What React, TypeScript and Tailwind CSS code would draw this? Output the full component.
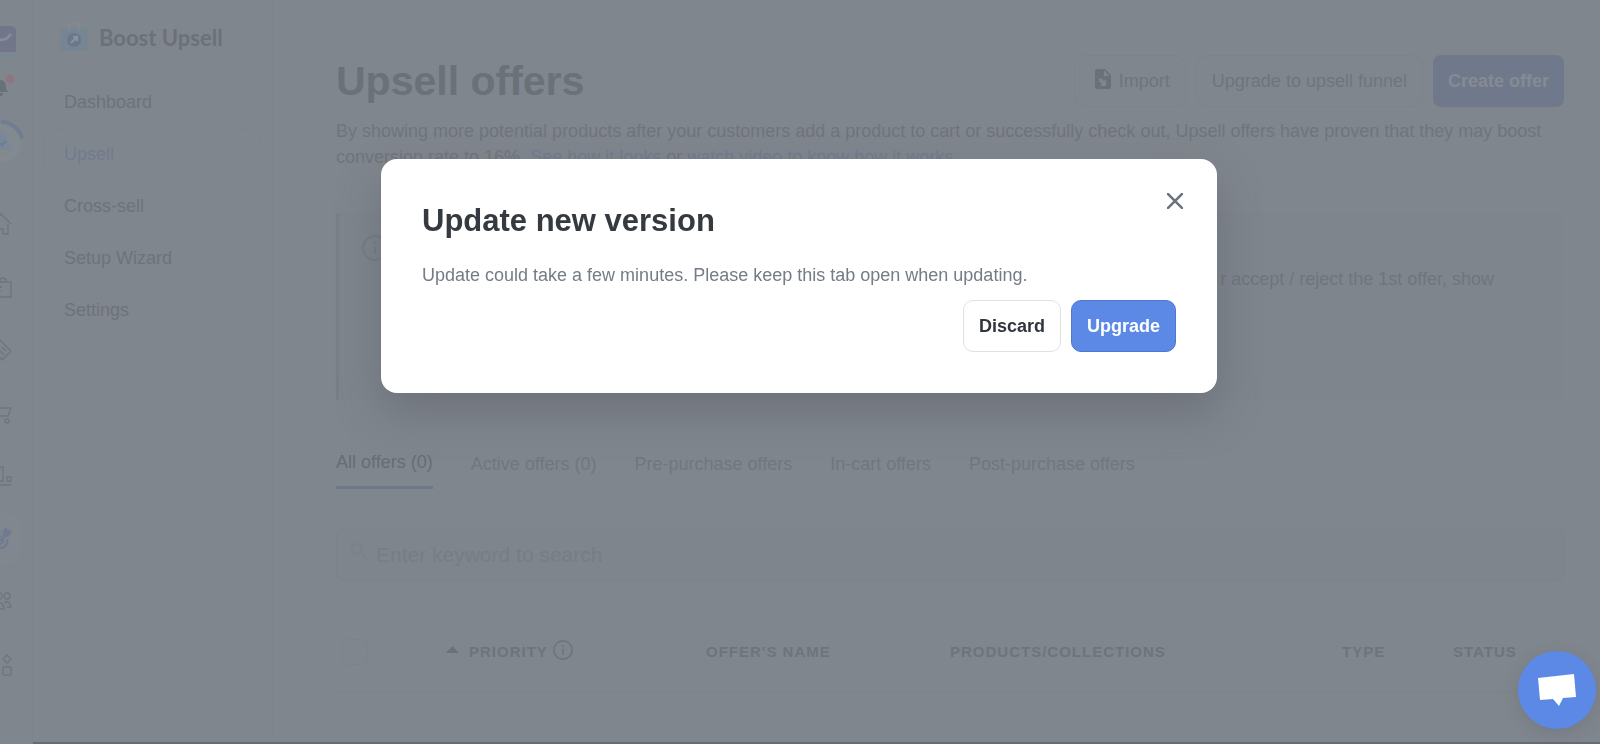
import { ReactNode } from 'react';

const menu = ['Dashboard', 'Upsell', 'Cross-sell', 'Setup Wizard', 'Settings'];

const tabs = ['Active offers (0)', 'Pre-purchase offers', 'In-cart offers', 'Post-purchase offers'];

const railItems: { name: string; active?: boolean; icon: ReactNode }[] = [
    { name: 'Home', icon: <path d="M-9 0 1 -10l10 10M8 0v10H3V5h-6v5h-5V0" /> },
    { name: 'Orders', icon: <path d="M-5 -5h16v15H-5zM0 -5v-1a3 3 0 0 1 6 0v1M-2 0h4M-2 4h3" /> },
    { name: 'Products', icon: <path d="M-9 -11h8L11 1l-9 9-11-12zM0 1l4 4M2 -3l4 4" /> },
    { name: 'Checkout', icon: <><path d="M-12 -5h23l-3 8h-16" /><circle cx="7" cy="8" r="2" /></> },
    { name: 'Reports', icon: <path d="M-3 -9h6V5h-6zM7 1h4v4H7zM-11 9h22" /> },
    {
        name: 'Marketing',
        active: true,
        icon: (
            <>
                <path strokeWidth="2" d="M7 0a7 7 0 0 1-7 9M3 0a4 4 0 0 1-3 5M0 -3a4 4 0 0 1 2 1M0 -7l1 1M0 2l6-6" />
                <path fill="currentColor" d="m3 -5 1-4 2-2 1 3 3-1-1 3 2 0-3 3-4 1z" />
            </>
        ),
    },
    { name: 'Customers', icon: <><circle cx="7" cy="-6" r="3" /><circle cx="-2" cy="-6" r="4" /><path d="M4 0c4-1 7 1 7 5H7M-8 7c0-9 12-9 12 0h-12" /></> },
    { name: 'Apps', icon: <><path d="m7 -10 4 4-4 4-4-4z" /><rect x="3" y="2" width="8" height="8" rx="1" /></> },
];

function InfoIcon({ className }: { className: string }) {
    return (
        <svg className={className} viewBox="0 0 24 24" fill="none" stroke="currentColor" strokeWidth="2" aria-hidden="true">
            <circle cx="12" cy="12" r="11" />
            <path d="M12 10.500v7M12 6v2.500" />
        </svg>
    );
}

function Rail() {
    return (
        <aside className="w-[33px] shrink-0 overflow-hidden border-r border-[#7f838a] pt-[26px]">
            <svg className="block h-8 w-8" viewBox="0 0 32 32" aria-hidden="true">
                <path fill="#7a8894" d="M0 20h16v6a5 5 0 0 1-5 5H0z" />
                <path fill="#71768b" d="M0 0h11a5 5 0 0 1 5 5v21H0z" />
                <path d="M0 14c5 0 8-2 10-5" fill="none" stroke="#868d94" strokeWidth="3" strokeLinecap="round" />
            </svg>
            <svg className="mt-4 block h-6 w-8" viewBox="0 0 32 24" aria-hidden="true">
                <path fill="#6a7077" d="M0 6c4 0 6 3 6 6v3l3 3H0zM0 19h3c0 2-1 3-3 3z" />
                <circle cx="10" cy="5" r="4" fill="#91747d" />
            </svg>
            <svg className="mt-5 block h-12 w-8" viewBox="0 0 32 48" aria-hidden="true">
                <circle cx="1" cy="25" r="20" fill="#82898f" />
                <path d="M1 4a21 21 0 0 1 21 17" fill="none" stroke="#717d90" strokeWidth="4" />
                <path fill="#788898" d="M0 13c5 0 8 5 8 12l4 4v6l-5-3H0z" />
                <path d="m0 25 2 2 4-4" fill="none" stroke="#707b90" strokeWidth="2" />
                <path fill="#878980" d="M0 34h4l-2 5zM4 34h4l-2 4z" />
            </svg>
            <nav className="mt-[26px]" aria-label="Store">
                {railItems.map((item) => (
                    <a
                        key={item.name}
                        href="#"
                        aria-label={item.name}
                        className={item.active ? 'flex h-[63px] items-center text-[#6f7b91]' : 'flex h-[63px] items-center text-[#6e757d]'}
                    >
                        <span className={item.active ? 'flex h-[52px] w-[22px] items-center rounded-r-2xl bg-[#81878e]' : 'flex h-[52px] w-[22px] items-center'}>
                            <svg className="h-8 w-[22px]" viewBox="0 -16 22 32" fill="none" stroke="currentColor" strokeWidth="1.300" aria-hidden="true">
                                {item.icon}
                            </svg>
                        </span>
                    </a>
                ))}
            </nav>
        </aside>
    );
}

function Sidebar() {
    return (
        <aside className="w-60 shrink-0 border-r border-[#7f838a] px-[10px]">
            <div className="flex items-center gap-[10px] pt-[18px] pl-4">
                <svg className="h-8 w-[30px]" viewBox="0 0 30 32" aria-hidden="true">
                    <path fill="#758591" d="M4 8h22a2 2 0 0 1 2 2l1 18a3 3 0 0 1-3 3H4a3 3 0 0 1-3-3l1-18a2 2 0 0 1 2-2z" />
                    <path d="M10 12V8c0-7 10-7 10 0v4" fill="none" stroke="#848b92" strokeWidth="1.500" />
                    <circle cx="15" cy="20" r="7" fill="#6b778e" />
                    <path d="m12 23 5-5M14 17h4v4" fill="none" stroke="#8b9299" strokeWidth="2" />
                </svg>
                <span className="pt-1 font-['Lato'] text-[22px] leading-8 font-bold text-[#6c7179]">Boost Upsell</span>
            </div>
            <nav className="mt-[22px]" aria-label="Boost Upsell">
                {menu.map((item) => (
                    <a
                        key={item}
                        href="#"
                        className={
                            item === 'Upsell'
                                ? 'flex h-[52px] items-center rounded-2xl border border-[#7f848b] bg-[#80868d] px-5 text-[#717b91]'
                                : 'flex h-[52px] items-center border border-transparent px-5 text-[#6d737b]'
                        }
                    >
                        {item}
                    </a>
                ))}
            </nav>
        </aside>
    );
}

function OffersPage() {
    return (
        <main className="min-w-0 flex-1 pt-[55px] pr-9 pl-[63px]">
            <div className="flex items-center justify-between">
                <h1 className="text-[41px] leading-[52px] font-bold text-[#6a7179]">Upsell offers</h1>
                <div className="flex gap-[10px]">
                    <button className="flex h-[52px] items-center gap-2 rounded-xl border border-[#7d8389] pr-[15px] pl-5">
                        <svg className="mb-1 h-5 w-4" viewBox="0 0 16 20" aria-hidden="true">
                            <path fill="#6a7179" d="M2 0h8l6 6v12a2 2 0 0 1-2 2H2a2 2 0 0 1-2-2V2C0 1 1 0 2 0z" />
                            <path fill="#80868d" d="M9 1.500V7h5.500zM4 9l3 1 2 2 2-2v7H5l2-2-3-3z" />
                        </svg>
                        Import
                    </button>
                    <button className="h-[52px] rounded-xl border border-[#7d8389] px-[15px]">Upgrade to upsell funnel</button>
                    <button className="h-[52px] rounded-lg bg-[#70798c] px-[15px] font-bold text-[#858b92]">Create offer</button>
                </div>
            </div>
            <p className="mt-[11px] leading-[26px]">
                By showing more potential products after your customers add a product to cart or successfully check out, Upsell offers have proven that they may boost conversion rate to 16%.{' '}
                <a href="#" className="text-[#717b90]">See how it looks</a> or{' '}
                <a href="#" className="text-[#717b90]">watch video to know how it works.</a>
            </p>

            <section className="mt-[43px] flex h-[187px] items-start justify-between border-l-[3px] border-[#787f87] bg-[#7f858c] pr-[70px] pl-[23px]">
                <InfoIcon className="mt-[22px] h-[26px] w-[26px] text-[#757c85]" />
                <p className="mt-[53px] leading-[26px]">r accept / reject the 1st offer, show</p>
            </section>

            <div className="mt-12 flex gap-[38px] leading-[26px]">
                <button className="border-b-[3px] border-[#6e788d] pt-px pb-[11px] text-[#666d75]">All offers (0)</button>
                {tabs.map((tab) => (
                    <button key={tab} className="pt-[3px] pb-3 text-[#71777f]">{tab}</button>
                ))}
            </div>

            <div className="mt-10 flex h-[52px] items-center rounded-lg border border-[#7e838a] bg-[#7f858c] px-3">
                <svg className="mb-2 h-5 w-5 text-[#7c8087]" viewBox="0 0 20 20" fill="none" stroke="currentColor" strokeWidth="2" aria-hidden="true">
                    <circle cx="8" cy="8" r="5" />
                    <path d="m12 12 6 6" />
                </svg>
                <input
                    type="text"
                    aria-label="Search offers"
                    placeholder="Enter keyword to search"
                    className="ml-[7px] min-w-0 flex-1 bg-transparent text-[21px] outline-none placeholder:text-[#777d85]"
                />
            </div>

            <table className="mt-[31px] w-full table-fixed border-b border-[#7c8289] text-left text-[15px] tracking-[1px] text-[#6e747c]">
                <thead>
                    <tr className="h-20">
                        <th className="w-[110px] pl-[6px]">
                            <input type="checkbox" aria-label="Select all offers" className="block h-[26px] w-[26px] appearance-none rounded-md border border-[#7d8389]" />
                        </th>
                        <th className="w-[260px]">
                            <button className="flex items-center font-bold tracking-[1px]">
                                <svg className="mr-[10px] mb-1 h-[7px] w-[13px]" viewBox="0 0 13 7" aria-hidden="true">
                                    <path fill="#6a7179" d="M0 7 6.500 0 13 7z" />
                                </svg>
                                PRIORITY
                                <InfoIcon className="mb-1 ml-[5px] h-5 w-5" />
                            </button>
                        </th>
                        <th className="w-[244px]">OFFER'S NAME</th>
                        <th>PRODUCTS/COLLECTIONS</th>
                        <th className="w-[111px]">TYPE</th>
                        <th className="w-[111px]">STATUS</th>
                    </tr>
                </thead>
            </table>
        </main>
    );
}

function UpdateDialog() {
    return (
        <div className="fixed inset-0 flex items-start justify-center pt-[159px] pr-0.5">
            <div
                role="dialog"
                aria-labelledby="update-title"
                className="relative w-[836px] rounded-2xl bg-white px-[41px] pt-[41px] pb-[41px] shadow-[0_20px_44px_rgba(80,85,98,0.4)]"
            >
                <button aria-label="Close" className="absolute top-[34px] right-[34px] text-[#69737d]">
                    <svg className="h-4 w-4" viewBox="0 0 16 16" fill="none" stroke="currentColor" strokeWidth="2.500" aria-hidden="true">
                        <path d="m0 0 16 16M16 0 0 16" />
                    </svg>
                </button>
                <h2 id="update-title" className="text-[31px] leading-[42px] font-bold text-[#343a40]">Update new version</h2>
                <p className="mt-5 leading-[26px] text-[#747c85]">Update could take a few minutes. Please keep this tab open when updating.</p>
                <div className="mt-3 flex justify-end gap-[10px] font-bold">
                    <button className="h-[52px] rounded-[10px] border border-[#dfe2e5] px-[15px] text-[#2f363d]">Discard</button>
                    <button className="h-[52px] rounded-[10px] border border-[#4f76d0] bg-[#5c89e6] px-[15px] text-white">Upgrade</button>
                </div>
            </div>
        </div>
    );
}

export default function App() {
    return (
        <div className="flex min-h-screen bg-[#80868d] font-['Liberation_Sans',Arial,sans-serif] text-[18px] text-[#6f757d]">
            <Rail />
            <div className="flex min-w-0 flex-1 border-b-2 border-[#656b77]">
                <Sidebar />
                <OffersPage />
            </div>
            <UpdateDialog />
            <button
                aria-label="Open chat"
                className="fixed right-1 bottom-[15px] flex h-[78px] w-[78px] items-center justify-center rounded-full bg-[#5c89e6] shadow-[0_4px_16px_rgba(70,75,85,0.2)]"
            >
                <svg className="h-8 w-[38px]" viewBox="0 0 38 32" fill="white" aria-hidden="true">
                    <path d="m0 4 36-4 2 23-13 1-4 8-6-7-13 1z" />
                </svg>
            </button>
        </div>
    );
}
